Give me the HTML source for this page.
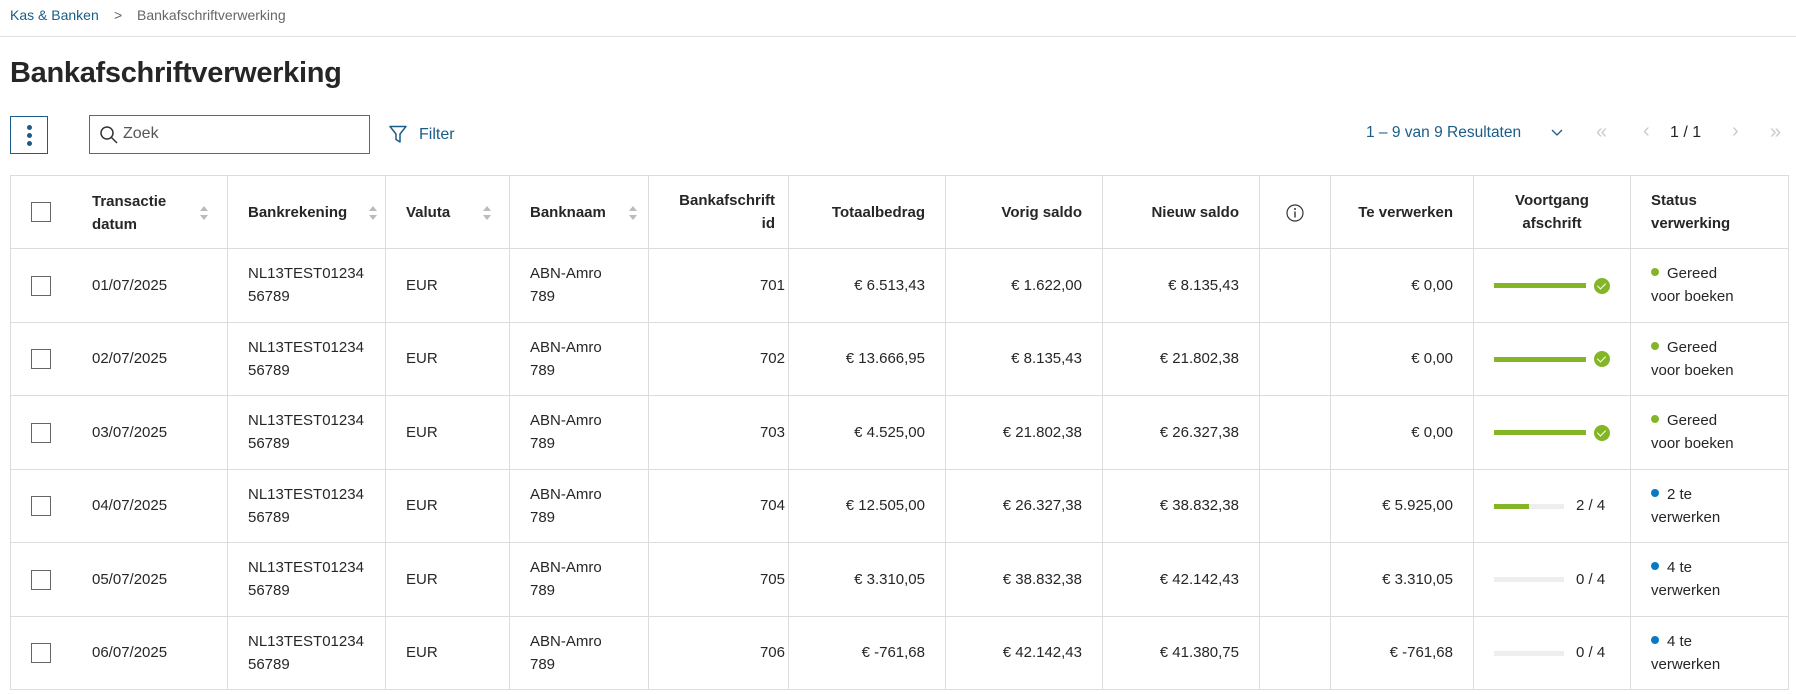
<!DOCTYPE html>
<html><head><meta charset="utf-8"><style>
*{box-sizing:border-box;margin:0;padding:0}
html,body{width:1796px;height:694px;overflow:hidden}
body{background:#fff;font-family:"Liberation Sans",sans-serif;color:#262626;font-size:15px;position:relative}
.a{position:absolute;white-space:nowrap}
.bc{top:7px;font-size:14px}
.line{position:absolute;left:0;right:0;top:36px;height:1px;background:#e0e0e0}
h1{position:absolute;left:10px;top:57px;font-size:29px;font-weight:bold;color:#262626;letter-spacing:-0.3px}
.kebab{position:absolute;left:10px;top:116px;width:38px;height:38px;border:1px solid #1a5d87}
.kebab i{position:absolute;left:16px;width:5px;height:5px;border-radius:50%;background:#1a5d87}
.search{position:absolute;left:89px;top:115px;width:281px;height:39px;border:1px solid #666}
.blue{color:#1a5d87}
table{position:absolute;left:10px;top:175px;border-collapse:collapse;table-layout:fixed;width:1778px}
td,th{border:1px solid #dcdcdc;padding:0 20px 0 20px;line-height:23px;vertical-align:middle;overflow:visible;white-space:nowrap}
th{height:73px;font-weight:bold;font-size:15px;text-align:left}
td{height:73.5px;font-size:15px}
.r{text-align:right}
.cb{display:inline-block;width:20px;height:20px;border:1px solid #666;vertical-align:middle}
.bar{display:inline-block;width:92px;height:5px;background:#eee;vertical-align:middle;position:relative}
.bar b{position:absolute;left:0;top:0;height:5px;background:#84b526}
.ok{display:inline-block;width:16px;height:16px;border-radius:50%;background:#84b526;vertical-align:middle;margin-left:8px;position:relative}
.ok:after{content:"";position:absolute;left:5px;top:3px;width:4px;height:7px;border:solid #fff;border-width:0 1.5px 1.5px 0;transform:rotate(45deg)}
.dot{display:inline-block;width:8px;height:8px;border-radius:50%;margin-right:8px;vertical-align:2px}
</style></head><body>
<div class="a bc blue" style="left:10px">Kas &amp; Banken</div>
<div class="a bc" style="left:114px;color:#666">&gt;</div>
<div class="a bc" style="left:137px;color:#666">Bankafschriftverwerking</div>
<div class="line"></div>
<h1>Bankafschriftverwerking</h1>
<div class="kebab"><i style="top:8px"></i><i style="top:16px"></i><i style="top:24px"></i></div>
<div class="search"><svg width="20" height="20" style="position:absolute;left:9px;top:9px" viewBox="0 0 20 20"><circle cx="8" cy="8" r="6" fill="none" stroke="#333" stroke-width="1.5"/><path d="M12.5 12.5L18 18" stroke="#333" stroke-width="1.5"/></svg><span class="a" style="left:33px;top:9px;font-size:16px;color:#555">Zoek</span></div>
<svg class="a" style="left:389px;top:125px" width="18" height="19" viewBox="0 0 18 19"><path d="M1 1.5H17L11 9V17L7 14.5V9Z" fill="none" stroke="#1a5d87" stroke-width="1.5" stroke-linejoin="round"/></svg>
<div class="a blue" style="left:419px;top:126px;font-size:16px">Filter</div>
<div class="a blue" style="left:1366px;top:124px;font-size:15.5px">1 – 9 van 9 Resultaten</div>
<svg class="a" style="left:1550px;top:128px" width="14" height="10"><path d="M2 2L7 7L12 2" fill="none" stroke="#1a5d87" stroke-width="1.3"/></svg>
<div class="a" style="left:1596px;top:121px;font-size:20px;color:#ccc">«</div>
<div class="a" style="left:1643px;top:120px;font-size:20px;color:#ccc">‹</div>
<div class="a" style="left:1670px;top:124px;font-size:16px">1 / 1</div>
<div class="a" style="left:1732px;top:120px;font-size:20px;color:#ccc">›</div>
<div class="a" style="left:1770px;top:121px;font-size:20px;color:#ccc">»</div>
<table>
<colgroup><col style="width:217px"><col style="width:158px"><col style="width:124px"><col style="width:139px"><col style="width:140px"><col style="width:157px"><col style="width:157px"><col style="width:157px"><col style="width:71px"><col style="width:143px"><col style="width:157px"><col style="width:158px"></colgroup>
<tr>
<th style="padding-left:0;position:relative"><span class="cb" style="position:absolute;left:20px;top:26px"></span><span style="position:absolute;left:81px;top:14px">Transactie<br>datum</span><svg class="a" style="left:188px;top:29px" width="10" height="16"><path d="M1 6L5 1L9 6Z M1 10L5 15L9 10Z" fill="#bbb"/></svg></th>
<th style="position:relative">Bankrekening<svg class="a" style="left:140px;top:29px" width="10" height="16"><path d="M1 6L5 1L9 6Z M1 10L5 15L9 10Z" fill="#bbb"/></svg></th>
<th style="position:relative">Valuta<svg class="a" style="left:96px;top:29px" width="10" height="16"><path d="M1 6L5 1L9 6Z M1 10L5 15L9 10Z" fill="#bbb"/></svg></th>
<th style="position:relative">Banknaam<svg class="a" style="left:118px;top:29px" width="10" height="16"><path d="M1 6L5 1L9 6Z M1 10L5 15L9 10Z" fill="#bbb"/></svg></th>
<th class="r" style="padding-right:13px">Bankafschrift<br>id</th>
<th class="r">Totaalbedrag</th>
<th class="r">Vorig saldo</th>
<th class="r">Nieuw saldo</th>
<th style="text-align:center;padding:0"><svg width="18" height="18" viewBox="0 0 18 18" style="vertical-align:middle"><circle cx="9" cy="9" r="8" fill="none" stroke="#333" stroke-width="1.2"/><path d="M9 7.5V13.5" stroke="#333" stroke-width="1.4"/><circle cx="9" cy="5" r="1" fill="#333"/></svg></th>
<th class="r">Te verwerken</th>
<th style="text-align:center">Voortgang<br>afschrift</th>
<th style="padding-left:20px">Status<br>verwerking</th>
</tr>
<tr><td style="padding-left:0"><span class="cb" style="margin-left:20px"></span><span style="margin-left:41px">01/07/2025</span></td><td>NL13TEST01234<br>56789</td><td>EUR</td><td>ABN-Amro<br>789</td><td class="r" style="padding-right:3px">701</td><td class="r">€ 6.513,43</td><td class="r">€ 1.622,00</td><td class="r">€ 8.135,43</td><td></td><td class="r">€ 0,00</td><td style="padding-left:20px"><span class="bar"><b style="width:92px"></b></span><span class="ok"></span></td><td><span class="dot" style="background:#84b526"></span>Gereed<br>voor boeken</td></tr>
<tr><td style="padding-left:0"><span class="cb" style="margin-left:20px"></span><span style="margin-left:41px">02/07/2025</span></td><td>NL13TEST01234<br>56789</td><td>EUR</td><td>ABN-Amro<br>789</td><td class="r" style="padding-right:3px">702</td><td class="r">€ 13.666,95</td><td class="r">€ 8.135,43</td><td class="r">€ 21.802,38</td><td></td><td class="r">€ 0,00</td><td style="padding-left:20px"><span class="bar"><b style="width:92px"></b></span><span class="ok"></span></td><td><span class="dot" style="background:#84b526"></span>Gereed<br>voor boeken</td></tr>
<tr><td style="padding-left:0"><span class="cb" style="margin-left:20px"></span><span style="margin-left:41px">03/07/2025</span></td><td>NL13TEST01234<br>56789</td><td>EUR</td><td>ABN-Amro<br>789</td><td class="r" style="padding-right:3px">703</td><td class="r">€ 4.525,00</td><td class="r">€ 21.802,38</td><td class="r">€ 26.327,38</td><td></td><td class="r">€ 0,00</td><td style="padding-left:20px"><span class="bar"><b style="width:92px"></b></span><span class="ok"></span></td><td><span class="dot" style="background:#84b526"></span>Gereed<br>voor boeken</td></tr>
<tr><td style="padding-left:0"><span class="cb" style="margin-left:20px"></span><span style="margin-left:41px">04/07/2025</span></td><td>NL13TEST01234<br>56789</td><td>EUR</td><td>ABN-Amro<br>789</td><td class="r" style="padding-right:3px">704</td><td class="r">€ 12.505,00</td><td class="r">€ 26.327,38</td><td class="r">€ 38.832,38</td><td></td><td class="r">€ 5.925,00</td><td style="padding-left:20px"><span class="bar" style="width:70px"><b style="width:35px"></b></span><span style="margin-left:12px">2 / 4</span></td><td><span class="dot" style="background:#0b78c2"></span>2 te<br>verwerken</td></tr>
<tr><td style="padding-left:0"><span class="cb" style="margin-left:20px"></span><span style="margin-left:41px">05/07/2025</span></td><td>NL13TEST01234<br>56789</td><td>EUR</td><td>ABN-Amro<br>789</td><td class="r" style="padding-right:3px">705</td><td class="r">€ 3.310,05</td><td class="r">€ 38.832,38</td><td class="r">€ 42.142,43</td><td></td><td class="r">€ 3.310,05</td><td style="padding-left:20px"><span class="bar" style="width:70px"></span><span style="margin-left:12px">0 / 4</span></td><td><span class="dot" style="background:#0b78c2"></span>4 te<br>verwerken</td></tr>
<tr><td style="padding-left:0"><span class="cb" style="margin-left:20px"></span><span style="margin-left:41px">06/07/2025</span></td><td>NL13TEST01234<br>56789</td><td>EUR</td><td>ABN-Amro<br>789</td><td class="r" style="padding-right:3px">706</td><td class="r">€ -761,68</td><td class="r">€ 42.142,43</td><td class="r">€ 41.380,75</td><td></td><td class="r">€ -761,68</td><td style="padding-left:20px"><span class="bar" style="width:70px"></span><span style="margin-left:12px">0 / 4</span></td><td><span class="dot" style="background:#0b78c2"></span>4 te<br>verwerken</td></tr>
</table>
</body></html>
